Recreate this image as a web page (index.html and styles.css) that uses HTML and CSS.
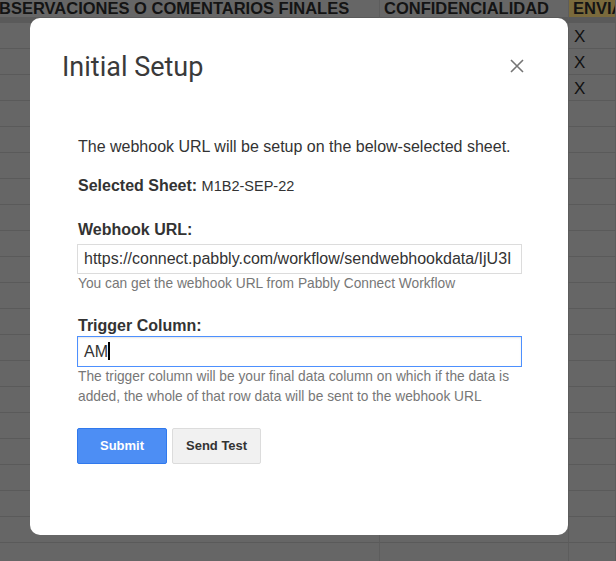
FILE: index.html
```html
<!DOCTYPE html>
<html>
    <head>
        <title>Initial Setup</title>
        <link rel="stylesheet" href="styles.css">
    </head>
    <body>
        <div class="sheet">
            <div class="head">BSERVACIONES O COMENTARIOS FINALES</div>
            <div class="head">CONFIDENCIALIDAD</div>
            <div class="head send">ENVIA</div>
            <div class="cell"></div><div class="cell"></div><div class="cell x">X</div>
            <div class="cell"></div><div class="cell"></div><div class="cell x">X</div>
            <div class="cell"></div><div class="cell"></div><div class="cell x">X</div>
            <div class="cell"></div><div class="cell"></div><div class="cell"></div>
            <div class="cell"></div><div class="cell"></div><div class="cell"></div>
            <div class="cell"></div><div class="cell"></div><div class="cell"></div>
            <div class="cell"></div><div class="cell"></div><div class="cell"></div>
            <div class="cell"></div><div class="cell"></div><div class="cell"></div>
            <div class="cell"></div><div class="cell"></div><div class="cell"></div>
            <div class="cell"></div><div class="cell"></div><div class="cell"></div>
            <div class="cell"></div><div class="cell"></div><div class="cell"></div>
            <div class="cell"></div><div class="cell"></div><div class="cell"></div>
            <div class="cell"></div><div class="cell"></div><div class="cell"></div>
            <div class="cell"></div><div class="cell"></div><div class="cell"></div>
            <div class="cell"></div><div class="cell"></div><div class="cell"></div>
            <div class="cell"></div><div class="cell"></div><div class="cell"></div>
            <div class="cell"></div><div class="cell"></div><div class="cell"></div>
            <div class="cell"></div><div class="cell"></div><div class="cell"></div>
            <div class="cell"></div><div class="cell"></div><div class="cell"></div>
            <div class="cell"></div><div class="cell"></div><div class="cell"></div>
            <div class="cell"></div><div class="cell"></div><div class="cell"></div>
        </div>

        <div class="dialog">
            <div class="title">
                <span>Initial Setup</span>
                <svg class="close" width="14" height="14" viewBox="0 0 14 14">
                    <path d="M1 1 L13 13 M13 1 L1 13" stroke="#757575" stroke-width="1.6" fill="none"/>
                </svg>
            </div>
            <div class="content">
                <p class="intro">The webhook URL will be setup on the below-selected sheet.</p>
                <p class="selected"><b>Selected Sheet:</b> <span class="sheet-name">M1B2-SEP-22</span></p>

                <label class="label">Webhook URL:</label>
                <div class="input">https://connect.pabbly.com/workflow/sendwebhookdata/IjU3I</div>
                <div class="help">You can get the webhook URL from Pabbly Connect Workflow</div>

                <label class="label trigger">Trigger Column:</label>
                <div class="input focus">AM<span class="caret"></span></div>
                <div class="help">The trigger column will be your final data column on which if the data is added, the whole of that row data will be sent to the webhook URL</div>

                <div class="buttons">
                    <div class="button action">Submit</div>
                    <div class="button">Send Test</div>
                </div>
            </div>
        </div>
    </body>
</html>
```

FILE: styles.css
```css
body {
    margin: 0;
    background: #666;
    font-family: "Liberation Sans", Arial, sans-serif;
    overflow: hidden;
}
.sheet {
    display: grid;
    grid-template-columns: 380px 189px 1fr;
    grid-auto-rows: 26px;
    grid-template-rows: 23px;
    height: 561px;
    overflow: hidden;
}
.head {
    font-weight: bold;
    font-size: 16.5px;
    color: #141414;
    line-height: 16px;
    padding-left: 4px;
    border-right: 1px solid #5d5d5d;
    border-bottom: 6px solid #5a5a5a;
    white-space: nowrap;
    overflow: hidden;
}
.head:first-child {
    padding-left: 0;
    margin-left: -1px;
}
.head.send {
    background: #7a6a3c;
}
.cell {
    border-right: 1px solid #5d5d5d;
    border-bottom: 1px solid #5a5a5a;
}
.x {
    font-size: 17px;
    color: #111;
    padding: 4px 0 0 5px;
}
.dialog {
    position: absolute;
    left: 30px;
    top: 18px;
    width: 538px;
    height: 517px;
    background: #fff;
    border-radius: 10px;
}
.title {
    display: flex;
    justify-content: space-between;
    align-items: center;
    padding: 33px 44px 0 32px;
    font-family: Roboto, sans-serif;
    font-size: 27px;
    color: #3a3a3a;
    height: 32px;
}
.close {
    margin-top: -3px;
}
.content {
    padding: 0 46px 0 48px;
    font-size: 16px;
    color: #333;
}
.intro {
    margin: 54px 0 0;
    line-height: 20px;
}
.selected {
    margin: 19px 0 0;
    line-height: 20px;
}
.sheet-name {
    font-size: 14.5px;
}
.label {
    display: block;
    font-weight: bold;
    margin-top: 24px;
    line-height: 20px;
}
.label.trigger {
    margin-top: 22px;
}
.input {
    margin: 4px 0 0 -1px;
    height: 28px;
    line-height: 28px;
    border: 1px solid #dcdcdc;
    padding: 0 6px;
    white-space: nowrap;
    overflow: hidden;
}
.input.focus {
    margin-top: 0;
    border-color: #4d90fe;
    height: 29px;
    line-height: 29px;
    box-shadow: inset 0 1px 2px rgba(0, 0, 0, 0.1);
}
.caret {
    display: inline-block;
    width: 2px;
    height: 18px;
    background: #000;
    vertical-align: -3px;
}
.help {
    font-size: 13.75px;
    color: #777;
    line-height: 20px;
}
.buttons {
    display: flex;
    gap: 5px;
    margin: 21px 0 0 -1px;
}
.button {
    font-size: 13px;
    font-weight: bold;
    color: #333;
    background: #f1f1f1;
    border: 1px solid #dcdcdc;
    border-radius: 2px;
    height: 34px;
    line-height: 34px;
    padding: 0 13px;
    cursor: pointer;
    user-select: none;
}
.button.action {
    background: #4d8ef4;
    border-color: #3079ed;
    color: #fff;
    width: 62px;
    text-align: center;
}
```
